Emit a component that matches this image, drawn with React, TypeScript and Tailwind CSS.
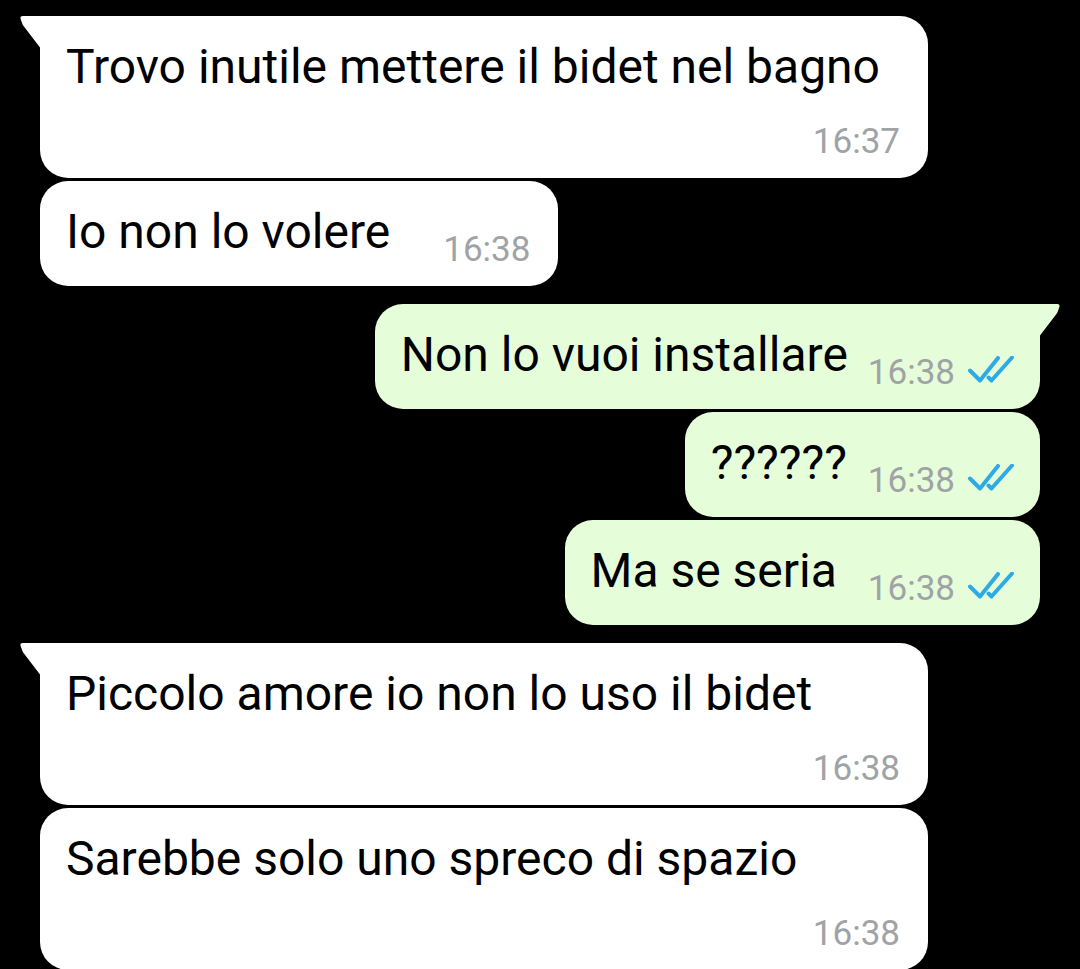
import React from 'react';

type Msg = {
  text: string;
  time: string;
  out?: boolean;
  tail?: boolean;
  stacked?: boolean;
  gap?: string;
  top: string;
};

const messages: Msg[] = [
  { text: 'Trovo inutile mettere il bidet nel bagno', time: '16:37', tail: true, stacked: true, top: 'mt-[16px]' },
  { text: 'Io non lo volere', time: '16:38', gap: 'mr-[53px]', top: 'mt-[3px]' },
  { text: 'Non lo vuoi installare', time: '16:38', out: true, tail: true, gap: 'mr-[20px]', top: 'mt-[18px]' },
  { text: '??????', time: '16:38', out: true, gap: 'mr-[21px]', top: 'mt-[3px]' },
  { text: 'Ma se seria', time: '16:38', out: true, gap: 'mr-[31px]', top: 'mt-[3px]' },
  { text: 'Piccolo amore io non lo uso il bidet', time: '16:38', tail: true, stacked: true, top: 'mt-[18px]' },
  { text: 'Sarebbe solo uno spreco di spazio', time: '16:38', stacked: true, top: 'mt-[3px]' },
];

function Tail({ out }: { out?: boolean }) {
  return (
    <svg
      width="22"
      height="38"
      viewBox="0 0 22 38"
      className={out ? 'absolute -right-[20px] top-0 -scale-x-100' : 'absolute -left-[20px] top-0'}
    >
      <path
        d="M22 0 H2.5 Q-0.5 0 0.8 3.5 L2.8 9 L20 31.5 Q20.3 33 20.3 38 H22 Z"
        fill={out ? '#e6fdd9' : '#ffffff'}
      />
    </svg>
  );
}

function DoubleCheck() {
  return (
    <svg width="46" height="28" viewBox="0 0 46 28" className="mb-[6px] ml-[13px] shrink-0">
      <path
        d="M2 14.5 L12 24.5 L30 2 M20.5 21.5 L23.5 24.5 L44 1.5"
        fill="none"
        stroke="#2eaae6"
        strokeWidth="4"
        strokeLinecap="round"
        strokeLinejoin="round"
      />
    </svg>
  );
}

function Bubble({ m }: { m: Msg }) {
  const bg = m.out ? 'bg-[#e6fdd9]' : 'bg-white';
  const corner = m.tail ? (m.out ? 'rounded-tr-none' : 'rounded-tl-none') : '';
  const time = (
    <div className="flex items-end">
      <span className="text-[35px] leading-none text-[#a0a3a6]">{m.time}</span>
      {m.out && <DoubleCheck />}
    </div>
  );

  if (m.stacked) {
    return (
      <div className={`relative ${m.top} w-[888px] self-start rounded-[28px] ${corner} ${bg} pb-[19px] pl-[26px] pr-[28px] pt-[27px]`}>
        {m.tail && <Tail />}
        <p className="text-[48px] leading-none text-black">{m.text}</p>
        <div className="mt-[33px] flex justify-end">{time}</div>
      </div>
    );
  }

  return (
    <div
      className={`relative ${m.top} flex items-end rounded-[28px] ${corner} ${bg} pb-[19px] pl-[26px] pt-[27px] ${
        m.out ? 'self-end pr-[26px]' : 'self-start pr-[28px]'
      }`}
    >
      {m.tail && <Tail out={m.out} />}
      <p className={`mb-[11px] whitespace-nowrap text-[48px] leading-none text-black ${m.gap}`}>{m.text}</p>
      {time}
    </div>
  );
}

export default function App() {
  return (
    <div className="h-[969px] w-[1080px] overflow-hidden bg-black font-['Roboto',sans-serif]">
      <div className="flex flex-col px-[40px]">
        {messages.map((m, i) => (
          <Bubble key={i} m={m} />
        ))}
      </div>
    </div>
  );
}
